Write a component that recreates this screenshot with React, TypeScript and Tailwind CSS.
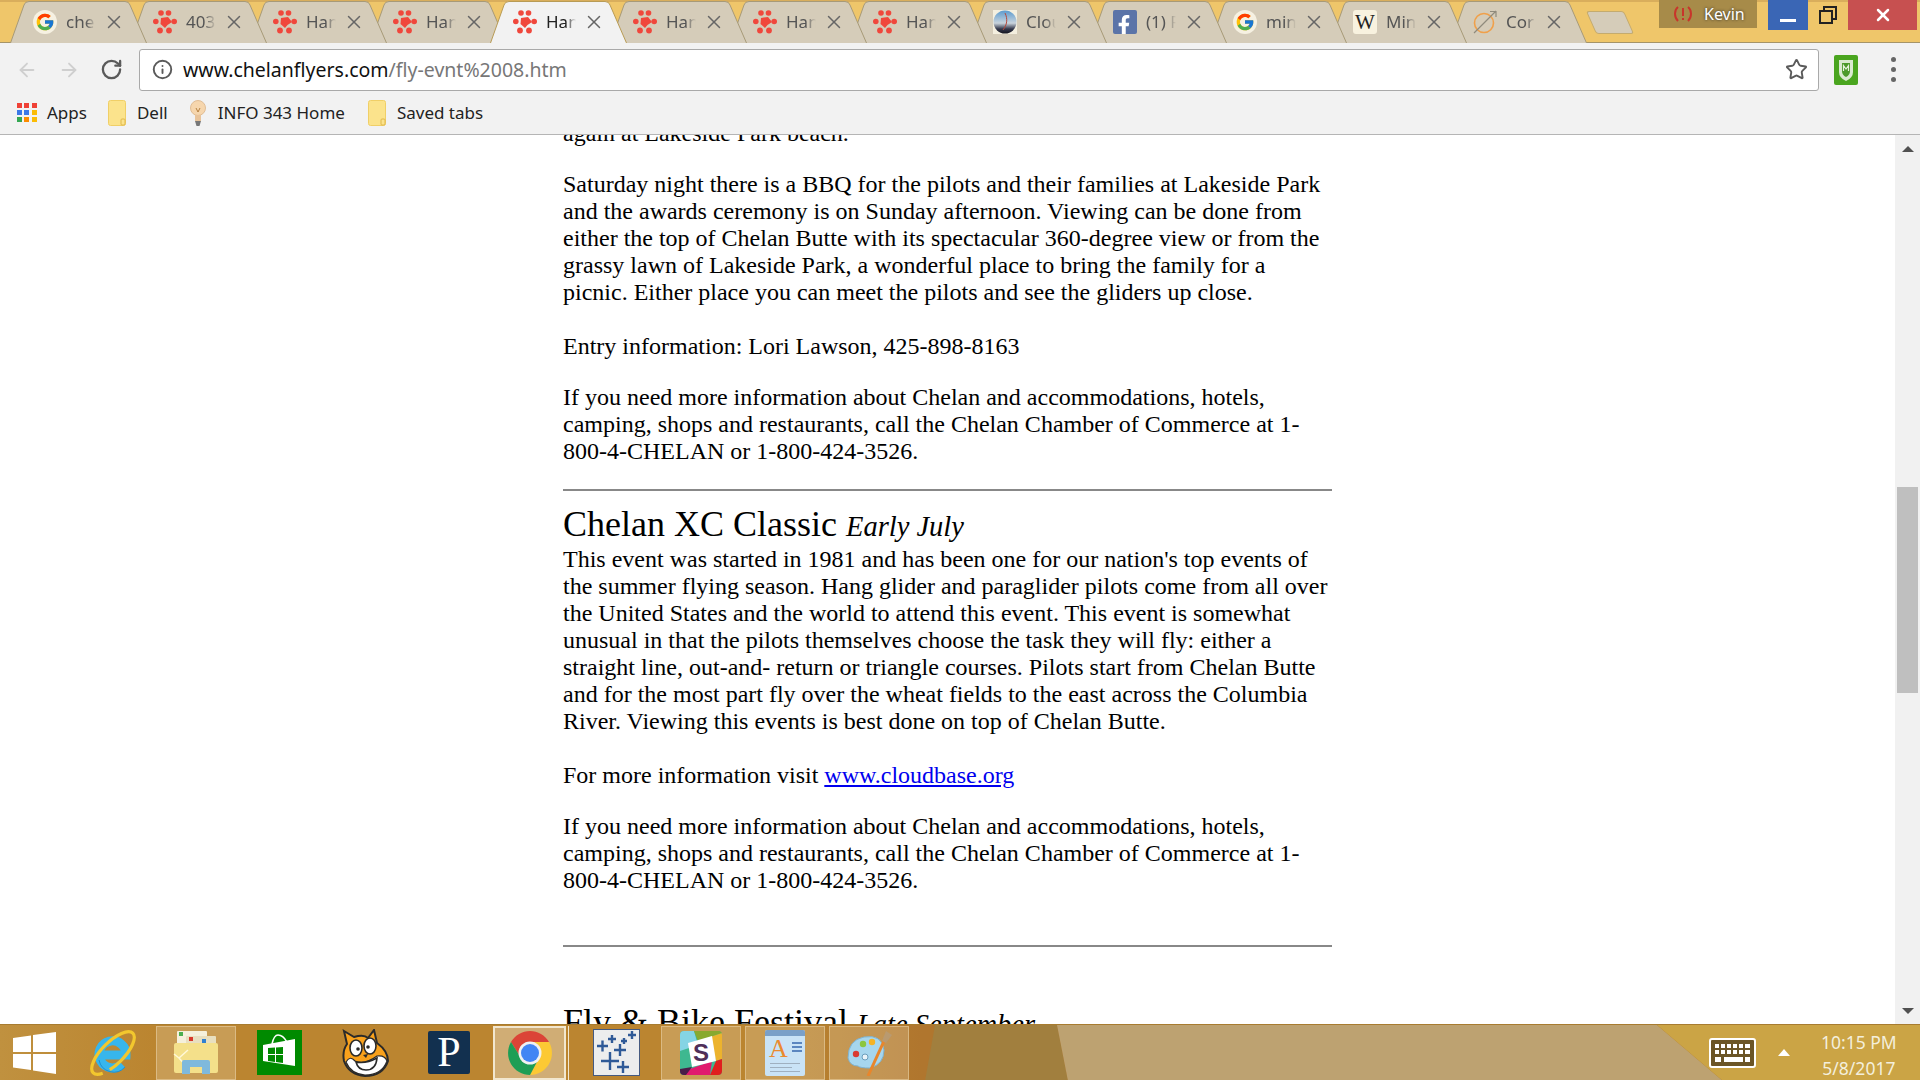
import React from 'react';
import { X, ArrowLeft, ArrowRight, RotateCw, Info, Star } from 'lucide-react';
import { FcGoogle } from 'react-icons/fc';
import { FaFacebookF } from 'react-icons/fa';

const HangLogo = () => (
    <svg width="24" height="24" viewBox="0 0 24 24" fill="#f0473c">
        <circle cx="8" cy="3" r="2.8" />
        <circle cx="15.5" cy="3" r="2.8" />
        <circle cx="2.8" cy="11.5" r="2.8" />
        <circle cx="21.2" cy="11.5" r="2.8" />
        <circle cx="7" cy="20.5" r="2.9" />
        <circle cx="16" cy="20.5" r="2.9" />
        <path d="M8 8 L15 7 L19 12 L14.5 15 L12 18 L7.5 14 Z" />
    </svg>
);

const GoogleFav = () => (
    <span className="flex h-6 w-6 items-center justify-center rounded-full bg-[#f6f1e2]">
        <FcGoogle size={20} />
    </span>
);

const CloudFav = () => (
    <svg width="24" height="24" viewBox="0 0 24 24">
        <defs>
            <linearGradient id="cl" x1="0" y1="0" x2="0" y2="1">
                <stop offset="0" stopColor="#5b9bcf" />
                <stop offset="0.55" stopColor="#c9d3dc" />
                <stop offset="0.8" stopColor="#34384c" />
                <stop offset="1" stopColor="#15151f" />
            </linearGradient>
        </defs>
        <rect width="24" height="24" fill="#f4efdf" />
        <circle cx="12" cy="12" r="11.5" fill="url(#cl)" />
        <path d="M12 3 C15 9 14 15 10 20" stroke="#b5473a" strokeWidth="1" fill="none" />
    </svg>
);

const FacebookFav = () => (
    <span className="flex h-6 w-6 items-end justify-end overflow-hidden rounded-[2px] bg-[#5b74a8] pr-[3px] text-white">
        <FaFacebookF size={20} className="-mb-[1px]" />
    </span>
);

const WikiFav = () => (
    <span className="flex h-6 w-6 items-center justify-center rounded-[3px] bg-[#f8f2df] font-['Liberation_Serif',serif] text-[21px] leading-none text-[#222]">
        W
    </span>
);

const ConfluenceFav = () => (
    <svg width="24" height="24" viewBox="0 0 24 24" fill="none">
        <circle cx="11" cy="13" r="9.5" stroke="#f0a04a" strokeWidth="1.6" />
        <path d="M1 23 L23 1 M17 1.5 H23 V7" stroke="#8f8a7c" strokeWidth="1.2" />
    </svg>
);

const tabs = [
    { label: 'che', icon: <GoogleFav /> },
    { label: '403', icon: <HangLogo /> },
    { label: 'Han', icon: <HangLogo /> },
    { label: 'Han', icon: <HangLogo /> },
    { label: 'Han', icon: <HangLogo />, active: true },
    { label: 'Han', icon: <HangLogo /> },
    { label: 'Han', icon: <HangLogo /> },
    { label: 'Han', icon: <HangLogo /> },
    { label: 'Clou', icon: <CloudFav /> },
    { label: '(1) F', icon: <FacebookFav /> },
    { label: 'min', icon: <GoogleFav /> },
    { label: 'Min', icon: <WikiFav /> },
    { label: 'Cor', icon: <ConfluenceFav /> },
];

const Tab = ({ label, icon, active, order }: { label: string; icon: React.ReactNode; active?: boolean; order: number }) => (
    <div className="relative -mr-[17px] h-[43px] w-[137px] shrink-0" style={{ zIndex: active ? 30 : 20 - order }}>
        <svg className="absolute inset-0" width="137" height="43" viewBox="0 0 137 43">
            <path
                d="M0.5 43 L14 5 Q15 1.5 19 1.5 H115 Q119 1.5 120 5 L136.5 43"
                fill={active ? '#f2f2f2' : '#d5ccb9'}
                stroke={active ? '#b89b55' : '#a79a78'}
            />
        </svg>
        <div className="relative flex h-[42px] items-center pl-[23px] pt-[2px]">
            <span className="w-6 shrink-0">{icon}</span>
            <span className={`ml-[9px] w-[30px] overflow-hidden whitespace-nowrap text-[17px] [mask-image:linear-gradient(to_right,black_65%,transparent)] ${active ? 'text-[#222]' : 'text-[#555]'}`}>
                {label}
            </span>
            <X size={22} strokeWidth={1.6} className="ml-[7px] shrink-0 text-[#666]" />
        </div>
    </div>
);

const TabStrip = () => (
    <div className="flex h-[43px] border-b border-[#a59468] border-t-2 border-t-[#d9ae5c] bg-[#efc66a]">
        <div className="ml-[10px] -mt-[2px] flex">
            {tabs.map((t, i) => (
                <Tab key={i} order={i} {...t} />
            ))}
        </div>
        <div className="ml-[21px] mt-[9px] h-[23px] w-[38px] skew-x-[24deg] rounded-[3px] border border-[#c4ab6e] bg-[#d5ccb9]" />
        <div className="ml-auto -mt-[2px] flex items-start">
            <div className="flex h-[28px] w-[98px] items-center bg-[#a78b49] pl-[14px] text-white">
                <svg width="20" height="18" viewBox="0 0 20 18" fill="none" stroke="#c8352b" strokeWidth="2">
                    <path d="M5 2 C1 5 1 12 5 16 M15 2 C19 5 19 12 15 16" />
                    <path d="M10 3 V11 M10 13 V15" />
                </svg>
                <span className="ml-[11px] text-[16px] [text-shadow:0_0_3px_#222]">Kevin</span>
            </div>
            <div className="ml-[11px] flex h-[30px] w-[40px] items-end justify-center bg-[#3a66b5] pb-[8px]">
                <div className="h-[3px] w-[16px] bg-white" />
            </div>
            <div className="flex h-[30px] w-[40px] items-center justify-center">
                <svg width="18" height="18" viewBox="0 0 18 18" fill="none" stroke="#222" strokeWidth="2">
                    <rect x="1" y="5" width="12" height="12" />
                    <path d="M5 4 V1 H17 V13 H14" />
                </svg>
            </div>
            <div className="mr-[3px] flex h-[30px] w-[69px] items-center justify-center bg-[#c75050]">
                <X size={20} strokeWidth={3} className="text-white" />
            </div>
        </div>
    </div>
);

const Toolbar = () => (
    <div className="flex h-[48px] items-center bg-[#f2f2f2] pt-[5px]">
        <ArrowLeft size={22} className="ml-[16px] shrink-0 text-[#cfcfcf]" />
        <ArrowRight size={22} className="ml-[20px] shrink-0 text-[#cfcfcf]" />
        <RotateCw size={23} strokeWidth={2.4} className="ml-[20px] shrink-0 text-[#5a5a5a]" />
        <div className="ml-[16px] flex h-[42px] min-w-0 flex-1 items-center rounded-[3px] border border-[#a9a9a9] bg-white pl-[12px] pr-[10px]">
            <Info size={21} strokeWidth={2.2} className="text-[#5a5a5a]" />
            <span className="ml-[10px] pt-[1px] font-['Noto_Sans',sans-serif] text-[19.5px] text-[#111]">
                www.chelanflyers.com<span className="text-[#777]">/fly-evnt%2008.htm</span>
            </span>
            <Star size={23} strokeWidth={2} className="ml-auto text-[#5a5a5a]" />
        </div>
        <svg className="ml-[15px] shrink-0" width="24" height="30" viewBox="0 0 24 30">
            <rect width="24" height="30" rx="2" fill="#4aa51f" />
            <path d="M5 5 H19 V17 Q19 23 12 26 Q5 23 5 17 Z" fill="#d9ead0" />
            <path d="M8 8 H16 V16 Q16 20 12 22 Q8 20 8 16 Z" fill="#4b9a2a" />
            <path d="M9.5 16 V10.5 L12 14 L14.5 10.5 V16" stroke="#e6f2dd" strokeWidth="1.2" fill="none" />
        </svg>
        <div className="ml-[33px] mr-[24px] flex shrink-0 flex-col gap-[5px]">
            <span className="h-[5px] w-[5px] rounded-full bg-[#666]" />
            <span className="h-[5px] w-[5px] rounded-full bg-[#666]" />
            <span className="h-[5px] w-[5px] rounded-full bg-[#666]" />
        </div>
    </div>
);

const FolderIcon = () => (
    <svg width="18" height="26" viewBox="0 0 18 26">
        <rect x="0.5" y="0.5" width="17" height="25" rx="2" fill="#fbe38c" stroke="#f0cf67" />
        <rect x="13" y="19" width="4" height="6" rx="1" fill="none" stroke="#e0b84c" />
    </svg>
);

const BulbIcon = () => (
    <svg width="16" height="26" viewBox="0 0 16 26">
        <circle cx="8" cy="8" r="7.5" fill="#f6d6ad" stroke="#e0bd95" />
        <path d="M6 8 L8 12 L10 8" stroke="#b5803f" fill="none" />
        <path d="M5 15 H11 V21 H5 Z" fill="#e9c49a" />
        <path d="M5 21 H11 L9.5 26 H6.5 Z" fill="#777" />
    </svg>
);

const AppsIcon = () => {
    const colors = ['#ef4136', '#ef4136', '#ef4136', '#3b78e7', '#3b78e7', '#fbbc05', '#34a853', '#fb8c00', '#fbbc05'];
    return (
        <div className="grid w-[20px] grid-cols-3 gap-[2px]">
            {colors.map((c, i) => (
                <span key={i} className="h-[5px] w-[5px]" style={{ backgroundColor: c }} />
            ))}
        </div>
    );
};

const Bookmarks = () => (
    <div className="flex h-[44px] items-center border-b border-[#b5b5b5] bg-[#f2f2f2] pl-[17px] font-['Noto_Sans',sans-serif] text-[17px] text-[#222]">
        <AppsIcon />
        <span className="ml-[10px]">Apps</span>
        <span className="ml-[21px]"><FolderIcon /></span>
        <span className="ml-[11px]">Dell</span>
        <span className="ml-[22px]"><BulbIcon /></span>
        <span className="ml-[12px]">INFO 343 Home</span>
        <span className="ml-[23px]"><FolderIcon /></span>
        <span className="ml-[11px]">Saved tabs</span>
    </div>
);

const Scrollbar = () => (
    <div className="flex w-[25px] shrink-0 flex-col items-center bg-[#f1f1f1]">
        <div className="mt-[11px] h-0 w-0 border-x-[6px] border-b-[6px] border-x-transparent border-b-[#505050]" />
        <div className="mt-[335px] h-[206px] w-[21px] bg-[#bfbfbf]" />
        <div className="mt-[315px] h-0 w-0 border-x-[6px] border-t-[6px] border-x-transparent border-t-[#505050]" />
    </div>
);

const Page = () => (
    <div className="flex-1 overflow-hidden bg-white font-['Liberation_Serif',serif] text-[24px] leading-[27px] text-black">
        <div className="-mt-[15px] ml-[563px] w-[769px] whitespace-nowrap">
            <p>again at Lakeside Park beach.</p>
            <p className="mt-[24px]">
                Saturday night there is a BBQ for the pilots and their families at Lakeside Park<br />
                and the awards ceremony is on Sunday afternoon. Viewing can be done from<br />
                either the top of Chelan Butte with its spectacular 360-degree view or from the<br />
                grassy lawn of Lakeside Park, a wonderful place to bring the family for a<br />
                picnic. Either place you can meet the pilots and see the gliders up close.
            </p>
            <p className="mt-[27px]">Entry information: Lori Lawson, 425-898-8163</p>
            <p className="mt-[24px]">
                If you need more information about Chelan and accommodations, hotels,<br />
                camping, shops and restaurants, call the Chelan Chamber of Commerce at 1-<br />
                800-4-CHELAN or 1-800-424-3526.
            </p>
            <hr className="mt-[24px] border-t-2 border-[#888]" />
            <h2 className="mt-[14px] text-[36px] leading-[38px]">
                Chelan XC Classic <em className="text-[28.5px]">Early July</em>
            </h2>
            <p>
                This event was started in 1981 and has been one for our nation's top events of<br />
                the summer flying season. Hang glider and paraglider pilots come from all over<br />
                the United States and the world to attend this event. This event is somewhat<br />
                unusual in that the pilots themselves choose the task they will fly: either a<br />
                straight line, out-and- return or triangle courses. Pilots start from Chelan Butte<br />
                and for the most part fly over the wheat fields to the east across the Columbia<br />
                River. Viewing this events is best done on top of Chelan Butte.
            </p>
            <p className="mt-[27px]">
                For more information visit <a className="text-[#0000ee] underline">www.cloudbase.org</a>
            </p>
            <p className="mt-[24px]">
                If you need more information about Chelan and accommodations, hotels,<br />
                camping, shops and restaurants, call the Chelan Chamber of Commerce at 1-<br />
                800-4-CHELAN or 1-800-424-3526.
            </p>
            <hr className="mt-[51px] border-t-2 border-[#888]" />
            <h2 className="mt-[56px] text-[36px] leading-[38px]">
                Fly &amp; Bike Festival <em className="text-[28.5px]">Late September</em>
            </h2>
        </div>
    </div>
);

const WinLogo = () => (
    <svg width="44" height="42" viewBox="0 0 44 42" fill="#fff">
        <path d="M0 6 L18 3.5 V20 H0 Z M20 3 L43 0 V20 H20 Z M0 22 H18 V38 L0 35.5 Z M20 22 H43 V42 L20 38.5 Z" />
    </svg>
);

const IeIcon = () => (
    <svg width="48" height="48" viewBox="0 0 48 48" fill="none">
        <path d="M12 26 H37 A13.5 13.5 0 1 0 33 35" stroke="#37b6ec" strokeWidth="9" />
        <path d="M10 31 A15 15 0 0 0 36 38" stroke="#1f8fd0" strokeWidth="1" />
        <ellipse cx="24" cy="24" rx="28" ry="11" transform="rotate(-45 24 24)" stroke="#f2c72e" strokeWidth="3.2" strokeDasharray="46 8 200" />
    </svg>
);

const ExplorerIcon = () => (
    <svg width="48" height="46" viewBox="0 0 48 46">
        <rect x="5" y="1" width="30" height="14" rx="1" fill="#f5f0dc" />
        <rect x="7" y="2" width="4" height="4" fill="#4caf50" />
        <rect x="14" y="6" width="30" height="14" rx="1" fill="#e8dfc0" />
        <rect x="17" y="7" width="4" height="4" fill="#d8392b" />
        <rect x="30" y="9" width="4" height="4" fill="#2f80d0" />
        <rect x="2" y="13" width="44" height="30" rx="2" fill="#f4e08a" />
        <path d="M7 28 L2 24 M7 28 L16 20 M7 28 L14 36" stroke="#fff8d8" strokeWidth="1.5" />
        <path d="M10 44 V32 Q10 30 12 30 H36 Q38 30 38 32 V44 H30 V37 H18 V44 Z" fill="#7fb9dc" />
    </svg>
);

const StoreIcon = () => (
    <svg width="45" height="45" viewBox="0 0 45 45">
        <rect width="45" height="45" fill="#008a00" />
        <path d="M15 14 Q17 5 21 5 Q26 5 30 12" stroke="#fff" strokeWidth="1.5" fill="none" />
        <path d="M6 15 L38 9 V36 L6 31 Z" fill="#fff" />
        <path d="M11 18 L18 17.5 V24 H11 Z M19 17.5 L26 17 V24 H19 Z M11 25 H18 V32 L11 31 Z M19 25 H26 V33 L19 32 Z" fill="#008a00" />
    </svg>
);

const ScratchIcon = () => (
    <svg width="48" height="48" viewBox="0 0 48 48">
        <path d="M3 2 L13 8 Q23 5 27 9 L33 1 L36 14 Q47 22 47 32 Q42 47 24 47 Q8 46 3 32 Q1 22 6 15 Z" fill="#f9a11b" stroke="#2a2a2a" strokeWidth="2" />
        <path d="M5 33 Q9 26 14 32 Q24 36 36 27 Q44 26 46 32 Q41 46 24 46 Q10 45 5 33 Z" fill="#fff" stroke="#2a2a2a" strokeWidth="1.2" />
        <ellipse cx="15" cy="19" rx="6" ry="8" fill="#fff" stroke="#2a2a2a" strokeWidth="1.6" />
        <ellipse cx="29" cy="17" rx="6" ry="8" fill="#fff" stroke="#2a2a2a" strokeWidth="1.6" />
        <circle cx="17" cy="20" r="1.8" fill="#2a2a2a" />
        <circle cx="27" cy="18" r="1.8" fill="#2a2a2a" />
        <path d="M22 26 L27 25 L25 29 Z" fill="#2a2a2a" />
        <path d="M15 33 Q25 35 36 29 Q35 41 25 41 Q17 41 15 33 Z" fill="#fff" stroke="#2a2a2a" strokeWidth="1.6" />
    </svg>
);

const ChromeIcon = () => (
    <svg width="44" height="44" viewBox="0 0 44 44">
        <path d="M3 11 A22 22 0 0 1 41 11 L22 11 L13 27 Z" fill="#db4437" />
        <path d="M41 11 A22 22 0 0 1 22 44 L31 27 L22 11 Z" fill="#fcc934" />
        <path d="M22 44 A22 22 0 0 1 3 11 L13 27 L31 27 Z" fill="#1e9e55" />
        <circle cx="22" cy="22" r="11.5" fill="#f1f1f1" />
        <circle cx="22" cy="22" r="9" fill="#4285f4" />
    </svg>
);

const TableauIcon = () => (
    <svg width="47" height="47" viewBox="0 0 47 47">
        <rect x="0.5" y="0.5" width="46" height="46" fill="#eceded" stroke="#455a80" />
        <path d="M8 32 H26 M17 23 V41 M4 17 H15 M9.5 11.5 V22.5 M15 10 H23 M19 6 V14 M21 21 H33 M27 15 V27 M28 12 H34 M31 9 V15 M35 6 H43 M39 2 V10 M24 38 H36 M30 32 V44" stroke="#2f5a97" strokeWidth="2.4" />
    </svg>
);

const SlackIcon = () => (
    <div className="relative h-[44px] w-[42px] overflow-hidden rounded-[4px] bg-[#3eb890]">
        <svg className="absolute inset-0" width="42" height="44" viewBox="0 0 42 44">
            <path d="M0 0 H14 L18 14 L0 20 Z" fill="#85d4e4" />
            <path d="M14 0 H42 V2 L18 10 Z" fill="#88a92f" />
            <path d="M30 6 L42 2 V28 L36 30 Z" fill="#ecb32d" />
            <path d="M36 30 L42 28 V44 H30 Z" fill="#e01e1e" />
            <path d="M10 38 L32 30 L30 44 H4 Z" fill="#e01a6e" />
            <path d="M0 38 L12 36 L6 44 H0 Z" fill="#4a1d48" />
            <path d="M8 12 L32 5 L36 30 L12 36 Z" fill="#fff" />
        </svg>
        <span className="relative flex h-full items-center justify-center font-['Liberation_Sans',sans-serif] text-[24px] font-bold text-[#4f2f59]">S</span>
    </div>
);

const WordpadIcon = () => (
    <div className="relative h-[46px] w-[40px] rounded-[2px] bg-[#c9e3f6]">
        <div className="h-[6px] rounded-t-[2px] bg-[#7aa0c8]" />
        <span className="absolute left-[4px] top-[6px] font-['Liberation_Serif',serif] text-[26px] leading-none text-[#ea8a2f]">A</span>
        <div className="absolute right-[3px] top-[12px] flex w-[10px] flex-col gap-[2px]">
            <span className="h-[2px] bg-[#5a86c0]" />
            <span className="h-[2px] bg-[#5a86c0]" />
            <span className="h-[2px] bg-[#5a86c0]" />
        </div>
        <div className="absolute inset-x-[5px] top-[33px] flex flex-col gap-[3px]">
            <span className="h-px bg-[#9fb0c0]" />
            <span className="h-px w-[22px] bg-[#9fb0c0]" />
            <span className="h-px bg-[#9fb0c0]" />
        </div>
    </div>
);

const PaintIcon = () => (
    <svg width="46" height="46" viewBox="0 0 46 46">
        <path d="M2 28 Q2 10 18 7 Q36 4 38 20 Q38 34 24 38 Q14 38 12 36 Q4 36 2 28 Z" fill="#a6d6ee" stroke="#7fb3d0" />
        <circle cx="10" cy="24" r="3.2" fill="#d93a32" />
        <circle cx="17" cy="14" r="3.2" fill="#8cc63f" />
        <circle cx="26" cy="12" r="3.2" fill="#f5b324" />
        <ellipse cx="19" cy="27" rx="3" ry="3" fill="#e8f3f9" stroke="#6a9dbb" />
        <path d="M22 46 L38 11" stroke="#e8862c" strokeWidth="3" />
        <path d="M36 11 L40 1 L46 5 L40 13 Z" fill="#b99a70" />
    </svg>
);

const KeyboardIcon = () => (
    <svg width="47" height="30" viewBox="0 0 47 30">
        <rect x="1" y="1" width="45" height="28" rx="2" fill="#6b5526" stroke="#fff" strokeWidth="2" />
        <path d="M6 6 h4 v4 h-4 z M12 6 h4 v4 h-4 z M18 6 h4 v4 h-4 z M24 6 h4 v4 h-4 z M30 6 h4 v4 h-4 z M36 6 h5 v4 h-5 z" fill="#fff" />
        <path d="M6 12 h4 v4 h-4 z M12 12 h4 v4 h-4 z M18 12 h4 v4 h-4 z M24 12 h4 v4 h-4 z M30 12 h4 v4 h-4 z M36 12 h5 v4 h-5 z" fill="#fff" />
        <path d="M6 19 h6 v5 h-6 z M15 19 h19 v5 h-19 z M36 19 h5 v5 h-5 z" fill="#fff" />
    </svg>
);

const TaskButton = ({ children }: { children: React.ReactNode }) => (
    <div className="flex h-[54px] w-[80px] items-center justify-center border border-[#e8cfa2]/60 bg-[#e8d3ac]/30">
        {children}
    </div>
);

const Taskbar = () => (
    <div className="relative flex h-[56px] shrink-0 items-center border-t border-[#a87c30] bg-[linear-gradient(90deg,#c0913f_0%,#bb8530_8%,#bb8530_40%,#b0762e_48%)] text-[#f4efdc]">
        {/* wallpaper behind the glass */}
        <svg className="absolute inset-0" width="1920" height="56" viewBox="0 0 1920 56" preserveAspectRatio="none">
            <path d="M935 0 H1057 L1068 56 H925 Z" fill="#a17f3e" />
            <path d="M1057 0 H1657 L1723 56 H1068 Z" fill="#bda271" />
            <path d="M1657 0 H1920 V56 H1723 Z" fill="#cba445" />
        </svg>
        <div className="relative flex w-full items-center">
            <span className="ml-[13px]"><WinLogo /></span>
            <span className="ml-[32px]"><IeIcon /></span>
            <span className="ml-[19px]"><TaskButton><ExplorerIcon /></TaskButton></span>
            <span className="ml-[21px]"><StoreIcon /></span>
            <span className="ml-[39px]"><ScratchIcon /></span>
            <div className="ml-[39px] flex h-[43px] w-[42px] items-center justify-center rounded-[2px] bg-[#12304f] font-['Liberation_Serif',serif] text-[42px] text-white">
                P
            </div>
            <div className="ml-[23px] flex h-[54px] w-[73px] items-center justify-center border-2 border-[#f2e7cf] bg-[#d0ad75]">
                <ChromeIcon />
            </div>
            <div className="h-[54px] w-[3px] border-r border-[#f2e7cf]" />
            <span className="ml-[24px]"><TableauIcon /></span>
            <span className="ml-[21px]"><TaskButton><SlackIcon /></TaskButton></span>
            <span className="ml-[4px]"><TaskButton><WordpadIcon /></TaskButton></span>
            <span className="ml-[4px]"><TaskButton><PaintIcon /></TaskButton></span>
            <span className="ml-[800px]"><KeyboardIcon /></span>
            <div className="ml-[22px] h-0 w-0 border-x-[6px] border-b-[7px] border-x-transparent border-b-white" />
            <div className="ml-[31px] pt-[5px] text-center font-['Noto_Sans',sans-serif] text-[17.5px] leading-[26px]">
                10:15 PM<br />5/8/2017
            </div>
        </div>
    </div>
);

export default function App() {
    return (
        <div className="flex h-[1080px] w-[1920px] flex-col overflow-hidden font-['Noto_Sans',sans-serif]">
            <TabStrip />
            <Toolbar />
            <Bookmarks />
            <div className="flex min-h-0 flex-1">
                <Page />
                <Scrollbar />
            </div>
            <Taskbar />
        </div>
    );
}
